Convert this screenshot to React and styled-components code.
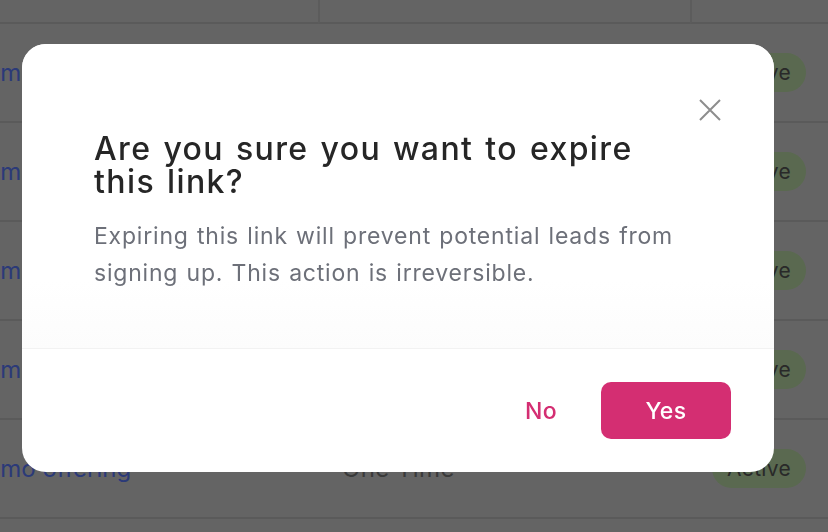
import React from "react";
import styled, { createGlobalStyle } from "styled-components";

const Global = createGlobalStyle`
  html, body { margin: 0; padding: 0; background: #c9c9c9; }
  body { font-family: Inter, "Noto Sans", sans-serif; overflow: hidden; }
  * { box-sizing: border-box; }
`;

const Page = styled.div`
  width: 828px;
  height: 532px;
  overflow: hidden;
  background: #c9c9c9;
`;

const Table = styled.div`
  margin-left: -31px;
  display: grid;
  grid-template-columns: 349px 372px 1fr;
`;

const HeadCell = styled.div`
  height: 24px;
  border-bottom: 2px solid #b4b4b4;
  border-left: ${(p) => (p.$first ? "none" : "2px solid #b8b8b8")};
`;

const Cell = styled.div`
  height: 99px;
  display: flex;
  align-items: center;
  padding-left: ${(p) => p.$pad || 0}px;
  border-bottom: 2px solid #b4b4b4;
  font-size: 24px;
  letter-spacing: ${(p) => p.$ls || 0}px;
  white-space: nowrap;
  color: ${(p) => p.$color || "#747474"};
`;

const Badge = styled.span`
  display: inline-flex;
  align-items: center;
  justify-content: center;
  width: 94px;
  height: 39px;
  border-radius: 20px;
  background: #b4d2a0;
  color: #525252;
  font-size: 21px;
  letter-spacing: 0.3px;
`;

const Backdrop = styled.div`
  position: fixed;
  inset: 0;
  background: rgba(0, 0, 0, 0.5);
  display: flex;
  align-items: flex-start;
  justify-content: flex-start;
  padding: 44px 0 0 22px;
`;

const Modal = styled.div`
  position: relative;
  width: 752px;
  height: 428px;
  background: #fff;
  border-radius: 24px;
  overflow: hidden;
  display: flex;
  flex-direction: column;
`;

const Close = styled.button`
  position: absolute;
  top: 55px;
  right: 53px;
  width: 22px;
  height: 22px;
  padding: 0;
  border: none;
  background: none;
  cursor: pointer;
  display: flex;
`;

const Body = styled.div`
  height: 305px;
  padding: 88px 72px 0 72px;
  background: linear-gradient(to bottom, #ffffff 78%, #fcfcfc 100%);
  border-bottom: 1px solid #f2f2f2;
`;

const Title = styled.h2`
  margin: 0 0 20px 0;
  font-size: 32px;
  line-height: 33px;
  font-weight: 500;
  color: #262626;
  letter-spacing: 1.4px;
  word-spacing: 2px;
`;

const Text = styled.p`
  margin: 0;
  font-size: 23px;
  line-height: 37px;
  color: #6d7079;
  letter-spacing: 0.8px;
  word-spacing: 1px;
`;

const Footer = styled.div`
  flex: 1;
  display: flex;
  justify-content: flex-end;
  align-items: center;
  padding: 0 43px 0 0;
  gap: 20px;
`;

const Button = styled.button`
  height: 57px;
  min-width: ${(p) => (p.$primary ? "130px" : "80px")};
  padding: 0 24px;
  border: none;
  border-radius: 10px;
  font-family: Inter, "Noto Sans", sans-serif;
  font-size: 23px;
  font-weight: 500;
  letter-spacing: 0.4px;
  cursor: pointer;
  background: ${(p) => (p.$primary ? "#d42e72" : "transparent")};
  color: ${(p) => (p.$primary ? "#ffffff" : "#d42e72")};
`;

const rows = [0, 1, 2, 3, 4];

export default function App() {
  return (
    <>
      <Global />
      <Page>
        <Table>
          <HeadCell $first />
          <HeadCell />
          <HeadCell />
          {rows.map((i) => (
            <React.Fragment key={i}>
              <Cell $color="#5674f0">Demo offering</Cell>
              <Cell $pad={24} $ls={0.4}>One Time</Cell>
              <Cell $pad={22}>
                <Badge>Active</Badge>
              </Cell>
            </React.Fragment>
          ))}
        </Table>
      </Page>
      <Backdrop>
        <Modal role="dialog">
          <Close aria-label="Close">
            <svg width="22" height="22" viewBox="0 0 22 22" fill="none">
              <path d="M1 1L21 21M21 1L1 21" stroke="#8d8d8d" strokeWidth="2" />
            </svg>
          </Close>
          <Body>
            <Title>Are you sure you want to expire this link?</Title>
            <Text>
              Expiring this link will prevent potential leads from signing up. This action is irreversible.
            </Text>
          </Body>
          <Footer>
            <Button>No</Button>
            <Button $primary>Yes</Button>
          </Footer>
        </Modal>
      </Backdrop>
    </>
  );
}
